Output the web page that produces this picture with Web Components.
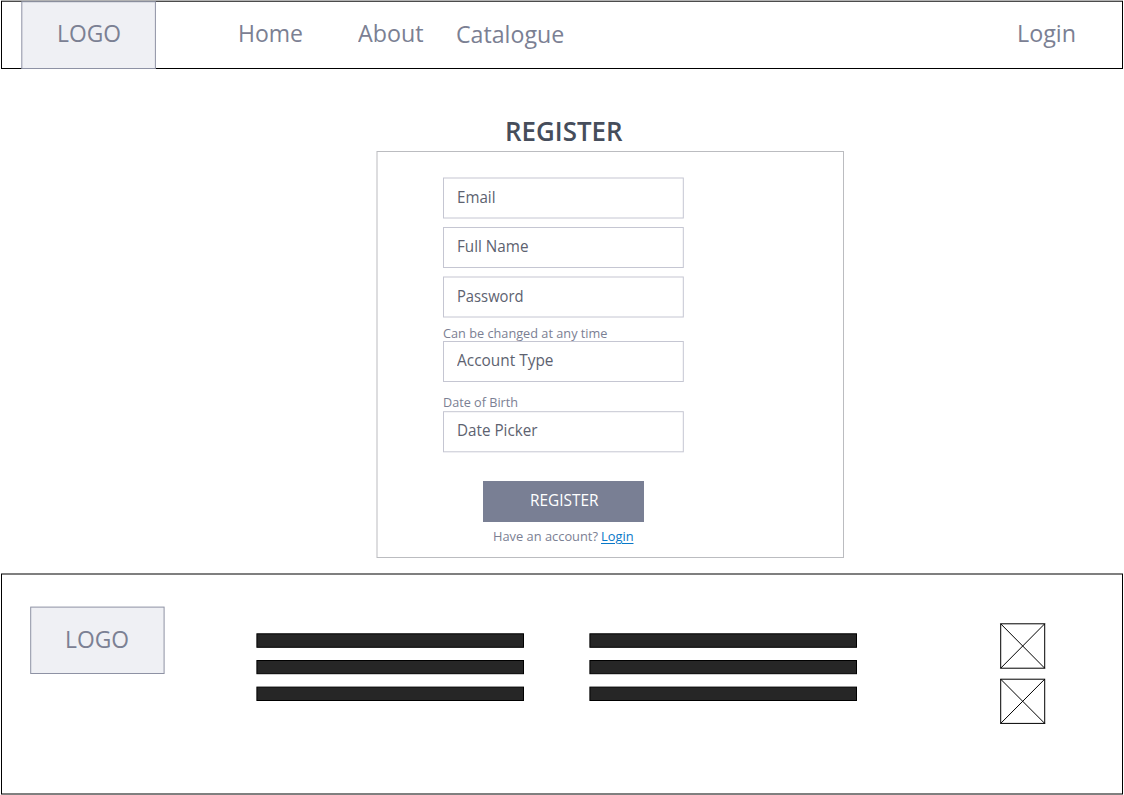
<!DOCTYPE html>
<html lang="en">
<head>
<meta charset="utf-8">
<title>Register</title>
<style>
html,body{margin:0;background:#fff}
body{width:1124px;height:795px;overflow:hidden;font-family:"Open Sans","Noto Sans",sans-serif;font-weight:380;color:#7b8093}
</style>
</head>
<body>
<register-page></register-page>
<script>
/* prepare runs on the cloned markup before its elements connect; ready runs once it is rendered. */
function define(name, html, {prepare, ready} = {}) {
  const tpl = document.createElement('template');
  tpl.innerHTML = html;
  customElements.define(name, class extends HTMLElement {
    connectedCallback() {
      if (this.shadowRoot) return;
      const content = tpl.content.cloneNode(true);
      if (prepare) prepare(this, content);
      this.attachShadow({mode: 'open'}).append(content);
      if (ready) ready(this, this.shadowRoot);
    }
  });
}

/* A stroked wireframe rectangle behind slotted content; frame = "x y width height". */
define('wire-box', `
<style>
:host{display:block;position:relative;box-sizing:border-box;flex:none}
svg{position:absolute;inset:0;width:100%;height:100%;overflow:visible;pointer-events:none}
rect{fill:var(--fill,none);stroke:var(--stroke,#000);stroke-width:1}
path{fill:none;stroke:#000;stroke-width:1}
.content{position:relative;display:flex;flex-direction:var(--flow,row)}
</style><svg><rect/><path/></svg><div class="content"><slot></slot></div>`, {prepare(host, root) {
  const [x, y, w, h] = host.getAttribute('frame').split(' ').map(Number);
  const r = root.querySelector('rect');
  Object.entries({x, y, width: w, height: h}).forEach(([k, v]) => r.setAttribute(k, v));
  if (host.hasAttribute('crossed'))
    root.querySelector('path').setAttribute('d', `M${x} ${y}l${w} ${h}M${x + w} ${y}l${-w} ${h}`);
}});

define('logo-box', `
<style>
:host{display:block;flex:none;width:135px;height:68px;font-size:24px;line-height:66px}
wire-box{height:68px;--fill:#eff0f4;--stroke:#8e92a4}
text-line{margin-left:35px}
</style><wire-box><text-line measure="64">LOGO</text-line></wire-box>`, {prepare(host, root) {
  root.querySelector('wire-box').setAttribute('frame', host.getAttribute('frame'));
}});

define('site-header', `
<style>
:host{display:block;height:69px;font-size:24px;line-height:66px}
wire-box{height:69px;padding-left:22px}
.home{margin-left:81px}.about{margin-left:55px}.cat{margin:1px 0 0 32px}.login{margin-left:453px}
</style>
<wire-box frame="1.5 1.2 1121 67.3">
<logo-box frame="-.2 1.7 133.6 66.8"></logo-box>
<text-line class="home" measure="65">Home</text-line>
<text-line class="about" measure="65.5">About</text-line>
<text-line class="cat" measure="108.2">Catalogue</text-line>
<text-line class="login" measure="59">Login</text-line>
</wire-box>`);

define('form-field', `
<style>
:host{display:block;height:41px;font-size:15.5px;line-height:var(--line,38px);color:#5d6270}
wire-box{height:41px;--stroke:#c5c6d2}
text-line{margin-left:14px}
</style><wire-box><text-line><slot></slot></text-line></wire-box>`, {prepare(host, root) {
  root.querySelector('wire-box').setAttribute('frame', host.getAttribute('frame'));
  root.querySelector('text-line').setAttribute('measure', host.getAttribute('measure'));
}});

define('register-form', `
<style>
:host{display:flex;flex-direction:column;width:468px;margin:42px 0 0 376px}
.title{margin-left:129px;height:40px;line-height:39px;font-size:26.67px;font-weight:570;color:#464d5b}
.card{height:407px;padding:26px 160px 0 67px;--stroke:#bbbcc0;--flow:column}
.email{--line:40px}
.full{margin-top:9px}.pass{margin-top:9px}
.note{font-size:13px;line-height:20px}
.n1{margin-top:5px}
.acct{margin-top:-2px}
.n2{margin-top:10px}
.dob{margin-top:-1px}
.button{width:161px;height:41px;margin:29px 0 0 40px;background:#797f94;color:#fff;font-size:15.5px;line-height:38px}
.button text-line{margin-left:47px}
.foot{display:flex;margin:4px 0 0 50px}
.link{color:#0878c8;margin-left:3px;text-decoration:underline;text-underline-offset:1.5px;text-decoration-thickness:1px}
</style>
<text-line class="title" measure="117.5">REGISTER</text-line>
<wire-box class="card" frame="1 .5 466.5 406">
<form-field class="email" frame=".5 1 239.8 40" measure="38.5">Email</form-field>
<form-field class="full" frame=".5 .5 239.8 40" measure="71.5">Full Name</form-field>
<form-field class="pass" frame=".5 0 239.8 40" measure="66.5">Password</form-field>
<text-line class="note n1" measure="164.5">Can be changed at any time</text-line>
<form-field class="acct" frame=".5 .5 239.8 40" measure="96.5">Account Type</form-field>
<text-line class="note n2" measure="75">Date of Birth</text-line>
<form-field class="dob" frame=".5 .7 239.8 40.1" measure="80.5">Date Picker</form-field>
<div class="button"><text-line measure="68.5">REGISTER</text-line></div>
<div class="foot note"><text-line measure="105">Have an account?</text-line><text-line class="link" measure="32.5">Login</text-line></div>
</wire-box>`);

define('text-bars', `
<style>
:host{display:block;flex:none;width:268px}
wire-box{height:15px;margin-bottom:12px;--fill:#262626}
.last{margin-top:-1px}
</style>
<wire-box frame=".9 .8 266.6 13.5"></wire-box>
<wire-box frame=".9 .5 266.6 13.2"></wire-box>
<wire-box class="last" frame=".9 1.1 266.6 13.4"></wire-box>`);

define('site-footer', `
<style>
:host{display:block;margin-top:15px;height:222px}
.outer{height:222px;padding:33px 0 0 30px}
.a{margin:27px 0 0 91px}.b{margin:27px 0 0 65px}
.social{flex:none;width:45px;margin:17px 0 0 143px}
.social wire-box{height:45px;margin-bottom:11px}
</style>
<wire-box class="outer" frame="1.5 1 1121 220">
<logo-box frame=".7 1.1 133.4 66.4"></logo-box>
<text-bars class="a"></text-bars>
<text-bars class="b"></text-bars>
<div class="social">
<wire-box crossed frame=".7 .8 44 44.4"></wire-box>
<wire-box crossed frame=".7 .2 44 44.2"></wire-box>
</div>
</wire-box>`);

define('register-page', `
<style>:host{display:flex;flex-direction:column;height:795px}</style>
<site-header></site-header>
<register-form></register-form>
<site-footer></site-footer>`);

/* One line of text set to a given measure; defined last, when every line has its final font. */
define('text-line', `<style>
:host{display:block;flex:none}
span{display:inline-block;white-space:nowrap;transform-origin:0 50%;text-decoration:inherit}
</style><span><slot></slot></span>`, {ready(host, root) {
  const span = root.querySelector('span');
  const want = +host.getAttribute('measure');
  host.style.width = want + 'px';
  const natural = span.getBoundingClientRect().width;
  const text = root.querySelector('slot').assignedNodes({flatten: true}).map(n => n.textContent).join('');
  if (natural > want) span.style.transform = 'scaleX(' + want / natural + ')';
  else span.style.letterSpacing = (want - natural) / text.length + 'px';
}});
</script>
</body>
</html>
